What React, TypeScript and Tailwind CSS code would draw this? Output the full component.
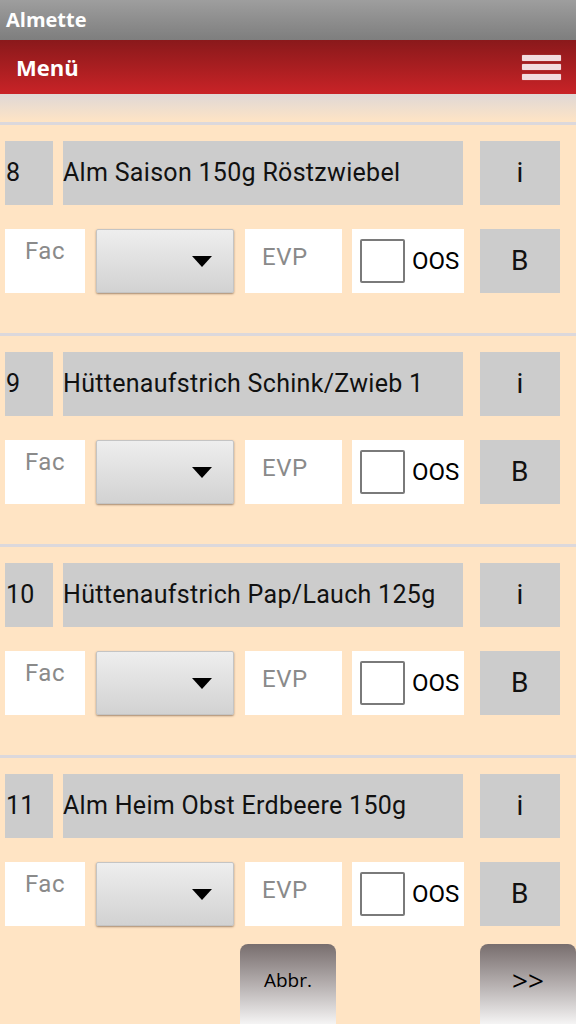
const items = [
  { nr: "8", name: "Alm Saison 150g Röstzwiebel" },
  { nr: "9", name: "Hüttenaufstrich Schink/Zwieb 1" },
  { nr: "10", name: "Hüttenaufstrich Pap/Lauch 125g" },
  { nr: "11", name: "Alm Heim Obst Erdbeere 150g" },
];

function ItemBlock({ nr, name }: { nr: string; name: string }) {
  return (
    <div className="border-t-[3px] border-[#dcd8dc] pt-[16px] px-[5px]" style={{ fontFamily: "Roboto, sans-serif" }}>
      <div className="flex h-[64px] text-[25px] tracking-[0.3px] text-[#111]">
        <div className="w-[48px] bg-[#cccccc] flex items-center pl-[1px]">{nr}</div>
        <div className="w-[400px] ml-[10px] bg-[#cccccc] flex items-center whitespace-nowrap overflow-hidden">
          {name}
        </div>
        <div className="w-[80px] ml-[17px] bg-[#cccccc] flex items-center justify-center text-[28px]">i</div>
      </div>
      <div className="flex h-[64px] mt-[24px] text-[24px] leading-none tracking-[0.5px]">
        <div className="w-[80px] bg-white flex justify-center pt-[10px] text-[#8a8a8a]">Fac</div>
        <div className="w-[138px] ml-[11px] rounded-[2px] border border-[#c4c4c4] bg-gradient-to-b from-[#eeeeee] to-[#d2d2d2] shadow-[0_1px_2px_rgba(90,60,40,0.55)] flex items-center justify-end pr-[21px]">
          <svg width="20" height="11" viewBox="0 0 20 11">
            <polygon points="0,0 20,0 10,11" fill="#000" />
          </svg>
        </div>
        <div className="w-[97px] ml-[11px] bg-white flex pl-[17px] pt-[16px] text-[#8a8a8a]">EVP</div>
        <div className="w-[112px] ml-[10px] bg-white flex items-center pl-[8px]">
          <div className="w-[45px] h-[44px] shrink-0 border-2 border-[#7a7a7a] rounded-[2px] bg-white"></div>
          <span className="ml-[7px] text-black tracking-[0px]">OOS</span>
        </div>
        <div className="w-[80px] ml-[16px] bg-[#cccccc] flex items-center justify-center text-[28px] text-[#111]">B</div>
      </div>
    </div>
  );
}

export default function App() {
  return (
    <div className="w-[576px] h-[1024px] overflow-hidden bg-[#ffe4c4] flex flex-col" style={{ fontFamily: "'Open Sans', sans-serif" }}>
      <div className="h-[40px] shrink-0 bg-gradient-to-b from-[#9e9e9e] to-[#7e7e7e] flex items-center pl-[6px] text-white text-[20px] font-bold">
        Almette
      </div>
      <div className="h-[54px] shrink-0 bg-gradient-to-b from-[#8a191b] to-[#c92327] flex items-center justify-between pl-[16px] pr-[15px]">
        <span className="text-white text-[22px] font-bold">Menü</span>
        <div className="flex flex-col gap-[3.5px]">
          <div className="w-[39px] h-[6px] bg-[#f2dcdf] rounded-[1px] shadow-[0_0_1px_rgba(255,255,255,0.6)]"></div>
          <div className="w-[39px] h-[6px] bg-[#f2dcdf] rounded-[1px] shadow-[0_0_1px_rgba(255,255,255,0.6)]"></div>
          <div className="w-[39px] h-[6px] bg-[#f2dcdf] rounded-[1px] shadow-[0_0_1px_rgba(255,255,255,0.6)]"></div>
        </div>
      </div>
      <div className="h-[28px] shrink-0 bg-gradient-to-b from-[#dfd8d6] to-[#ffe4c4]"></div>
      <div className="flex flex-col gap-[40px]">
        {items.map((it) => (
          <ItemBlock key={it.nr} nr={it.nr} name={it.name} />
        ))}
      </div>
      <div className="flex mt-[18px]">
        <div className="ml-[240px] w-[96px] h-[86px] rounded-t-[8px] bg-gradient-to-b from-[#786e6e] to-[#ffffff] flex items-center justify-center pb-[14px] text-[19px] text-black">
          Abbr.
        </div>
        <div className="ml-[144px] w-[96px] h-[86px] rounded-t-[8px] bg-gradient-to-b from-[#786e6e] to-[#ffffff] flex items-center justify-center pb-[14px] text-[28px] text-black">
          &gt;&gt;
        </div>
      </div>
    </div>
  );
}
